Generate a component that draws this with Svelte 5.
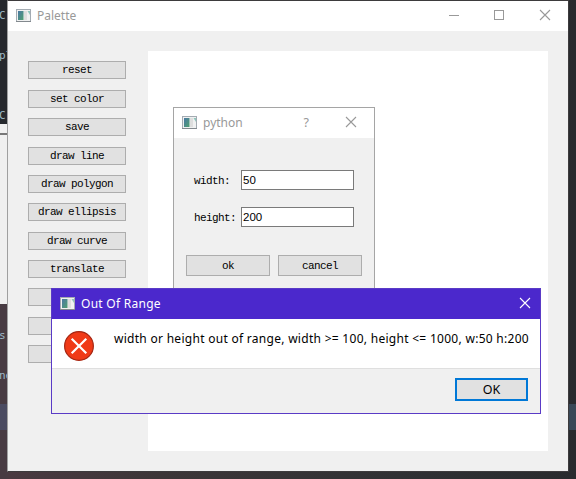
<script>
  const tools = ['reset', 'set color', 'save', 'draw line', 'draw polygon', 'draw ellipsis', 'draw curve', 'translate', '', '', ''];
</script>

{#snippet appIcon()}
  <svg class="app" width="16" height="14" viewBox="0 0 16 14">
    <defs><linearGradient id="g" x1="0" y1="0" x2="1" y2="1"><stop offset="0" stop-color="#4a78a4" /><stop offset="1" stop-color="#4fa070" /></linearGradient></defs>
    <rect x=".5" y=".5" width="14" height="12" fill="#f0f1f1" stroke="#a3abb2" />
    <path d="M0 12.5h15" stroke="#83898e" />
    <rect x="2" y="2" width="5.5" height="9" fill="url(#g)" />
    <rect x="8" y="2" width="3" height="9" fill="#dedede" />
    <path d="M11.5 2h2.5v4z" fill="#8fc5bb" />
  </svg>
{/snippet}

{#snippet cross()}
  <svg class="cross" width="10" height="10" viewBox="0 0 10 10"><path d="M0 0l10 10M10 0l-10 10" fill="none" stroke="currentColor" stroke-width="1.1" /></svg>
{/snippet}

<div class="desktop">
  <div class="code">
    <span style:top="8px">Cr</span><span style:top="48px">pl</span><span style:top="108px">Cr</span>
    <span style:top="328px">s</span><span style:top="368px">ne</span>
  </div>
  <div class="paper"></div>
  <div class="band"></div>

  <section class="window main">
    <header>{@render appIcon()}<b class="t1">Palette</b>
      <div class="controls">
        <svg width="10" height="10"><path d="M0 5.5h10" stroke="currentColor" /></svg>
        <svg width="10" height="10"><rect x=".5" y=".5" width="9" height="9" fill="none" stroke="currentColor" /></svg>
        {@render cross()}
      </div>
    </header>
    <div class="body">
      <nav>
        {#each tools as tool}<button>{tool}</button>{/each}
      </nav>
      <div class="canvas"></div>
    </div>
  </section>

  <section class="window size">
    <header>{@render appIcon()}<b class="t2">python</b>
      <div class="controls"><span class="help">?</span>{@render cross()}</div>
    </header>
    <div class="form">
      <label><span>width:</span><input value="50" /></label>
      <label><span>height:</span><input value="200" /></label>
      <div class="actions"><button>ok</button><button>cancel</button></div>
    </div>
  </section>

  <section class="window alert">
    <header>{@render appIcon()}<b class="t3">Out Of Range</b>
      <div class="controls">{@render cross()}</div>
    </header>
    <div class="message">
      <svg width="30" height="30" viewBox="0 0 30 30"><circle cx="15" cy="15" r="14.4" fill="#f03a17" stroke="#a52714" stroke-width="1.2" /><path d="M7.7 7.7l14.6 14.6M22.3 7.7L7.7 22.3" stroke="#fff" stroke-width="2.2" /></svg>
      <p>width or height out of range, width &gt;= 100, height &lt;= 1000, w:50 h:200</p>
    </div>
    <footer><button>OK</button></footer>
  </section>
</div>

<style>
  .desktop {
    position: relative;
    width: 576px;
    height: 479px;
    overflow: hidden;
    background: linear-gradient(90deg, #4a3a41 0 8px, #3c3638 160px, #303134 400px, #292b2e);
  }
  .code { position: absolute; left: 0; top: 0; width: 8px; height: 479px; overflow: hidden; background: linear-gradient(#26282d 0 124px, #483b42 124px); }
  .code span { position: absolute; left: -1px; font: 11px/16px "DejaVu Sans Mono", monospace; color: #9fb9c7; }
  .paper { position: absolute; left: 0; top: 124px; width: 8px; height: 180px; background: linear-gradient(#f0f0f0 0 9px, #777 9px 11px, #f0f0f0 11px); }
  .band { position: absolute; left: 0; top: 404px; width: 576px; height: 26px; background: linear-gradient(90deg, #4b4b61, #394857); }
  .window { position: absolute; box-sizing: border-box; display: flex; flex-direction: column; background: #f0f0f0; }
  header { display: flex; flex: none; height: 30px; align-items: center; background: #fff; color: #999; }
  header b { font: 12px/16px "Noto Sans", sans-serif; white-space: pre; }
  .app { flex: none; margin-bottom: 1px; }
  .controls { display: flex; align-items: center; margin-left: auto; }
  svg { display: block; }
  .controls svg { margin-bottom: 2px; overflow: visible; }
  .main .cross { margin-left: 1px; }
  button {
    box-sizing: border-box; margin: 0; padding: 1px 0 0; border: 1px solid #adadad; border-radius: 0; background: #e1e1e1; color: #000;
    font: 11px/15px "Liberation Mono", monospace; letter-spacing: -.6px;
  }
  .main { left: 7px; top: 0; width: 562px; height: 472px; border: 1px solid #3d3b3d; border-left-color: #a0a0a0; }
  .main header { padding: 0 18px 0 8px; }
  .main .controls { gap: 35px; }
  .t1 { margin-left: 5px; }
  .body { display: flex; flex: 1; padding: 20px; }
  nav { display: flex; flex-direction: column; gap: 10px; width: 98px; padding-top: 10px; margin-right: 22px; }
  nav button { height: 18px; flex: none; }
  nav button:nth-child(3n + 4), nav button:nth-child(2) { margin-top: 1px; }
  .canvas { width: 400px; height: 400px; background: #fff; }

  .size { left: 173px; top: 107px; width: 202px; height: 200px; border: 1px solid #a5a5a5; }
  .size header { padding: 0 18px 0 8px; }
  .t2 { margin-left: 5px; }
  .help { font: 12.5px/16px "Noto Sans", sans-serif; margin: 0 37px 1px 0; }
  .form { padding: 32px 12px 0; }
  label { display: flex; align-items: center; height: 20px; margin: 0 8px 17px; font: 11px/16px "Liberation Mono", monospace; letter-spacing: -.6px; }
  label span { width: 47px; padding-top: 1px; }
  input { box-sizing: border-box; width: 113px; height: 20px; margin: 0; padding: 0 1px; border: 1px solid #7a7a7a; border-radius: 0; background: #fff; color: #000; font: 11.5px "Liberation Sans", sans-serif; }
  .actions { display: flex; gap: 8px; margin-top: 28px; }
  .actions button { width: 84px; height: 21px; }

  .alert { left: 51px; top: 288px; width: 490px; height: 126px; border: 1px solid #5a3bc6; }
  .alert header { background: #4b28cc; color: #fff; padding: 0 10px 0 8px; }
  .t3 { margin-left: 5px; letter-spacing: .27px; }
  .message { display: flex; flex: none; box-sizing: border-box; height: 50px; padding: 12px 11px 0 12px; background: #fff; border-bottom: 1px solid #dfdfdf; }
  p { margin: 0 0 0 20px; font: 12px/16px "Noto Sans", sans-serif; letter-spacing: .285px; white-space: pre; color: #000; }
  footer { display: flex; justify-content: flex-end; padding: 9px 12px; }
  footer button { width: 73px; height: 23px; padding: 0; border: 2px solid #0078d7; font: 12.5px/18px "Noto Sans", sans-serif; letter-spacing: 0; }
</style>
